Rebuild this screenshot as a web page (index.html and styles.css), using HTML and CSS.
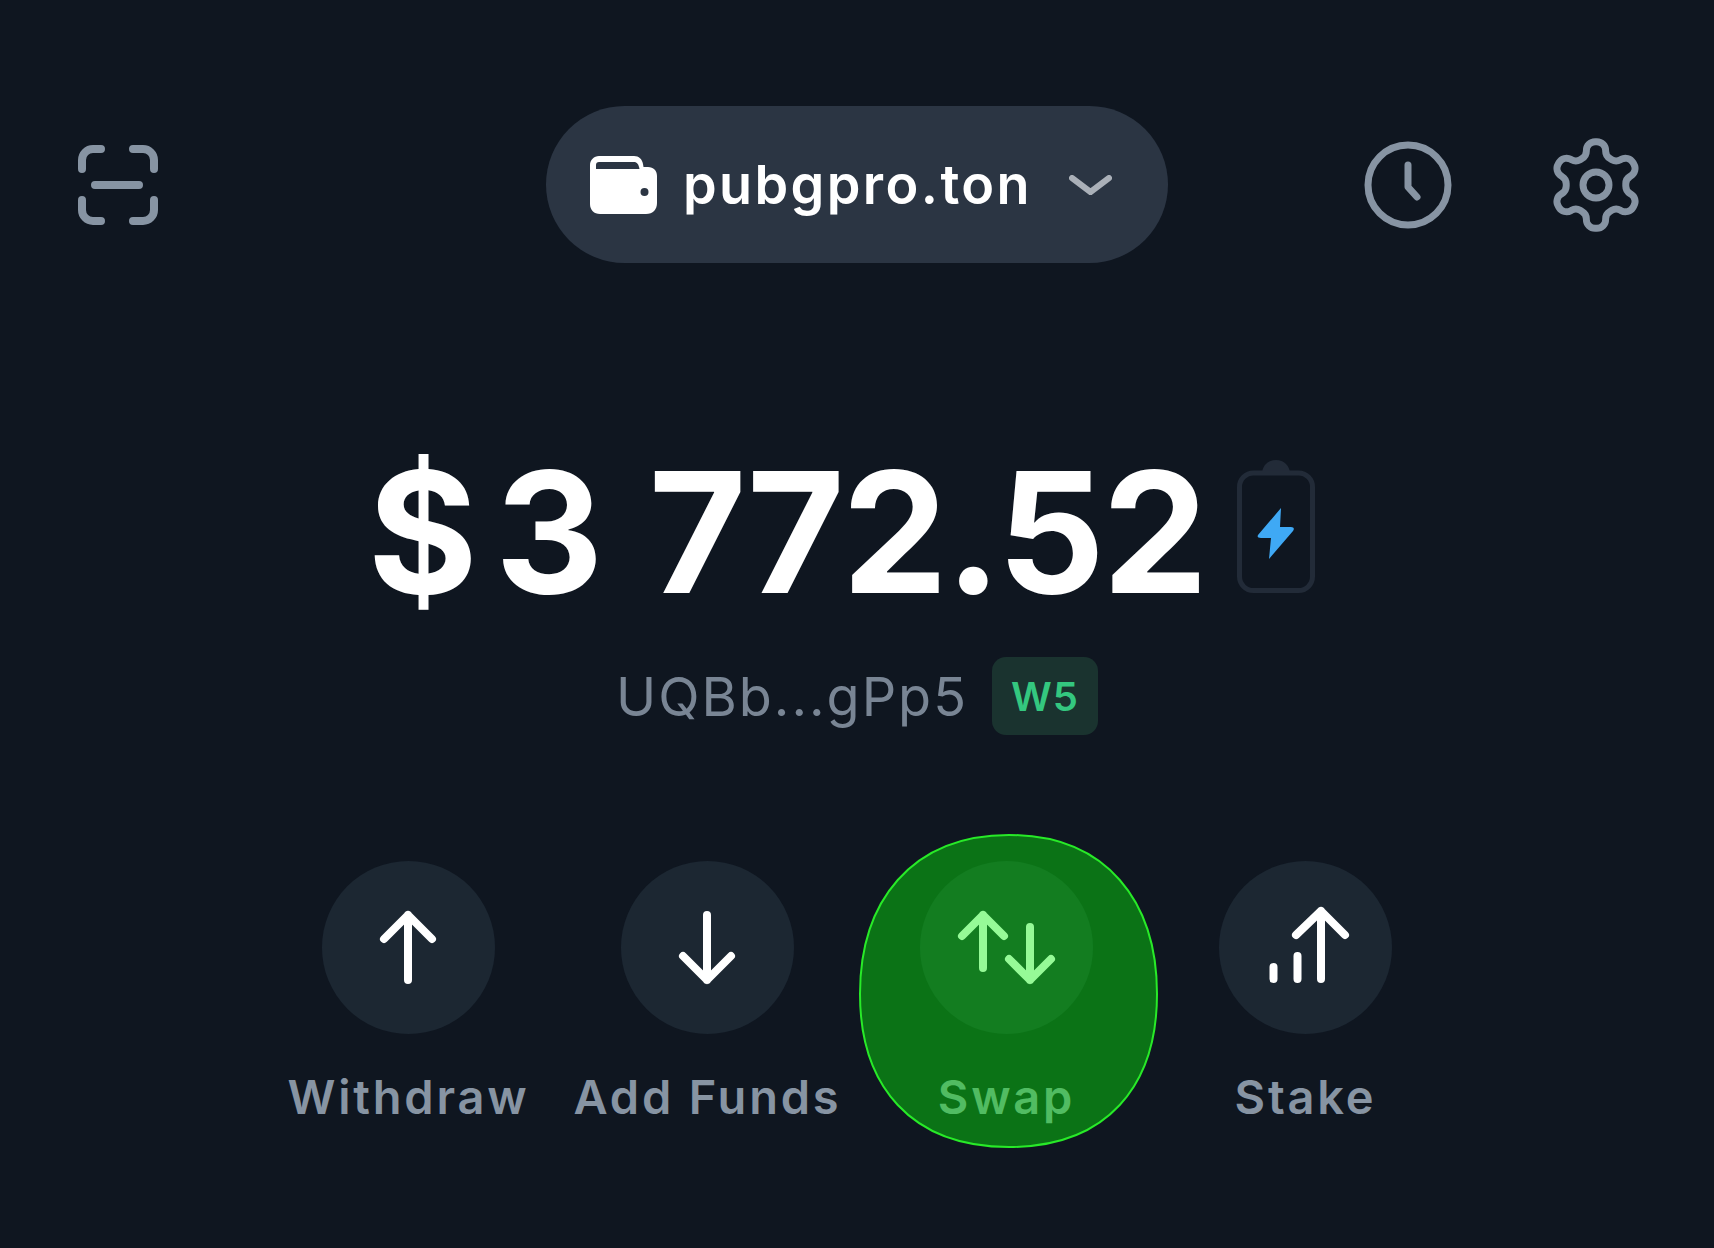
FILE: index.html
```html
<!DOCTYPE html>
<html lang="en">
<head>
  <meta charset="UTF-8">
  <title>Wallet</title>
  <link rel="stylesheet" href="styles.css">
</head>
<body>
  <div class="screen">
    <div class="header">
      <svg class="icon-scan" viewBox="0 0 80 80" fill="none">
        <path d="M4 24V15A11 11 0 0 1 15 4H23M55 4H65A11 11 0 0 1 76 15V24M4 55V65A11 11 0 0 0 15 76H23M55 76H65A11 11 0 0 0 76 65V55M17 40H61"/>
      </svg>
      <div class="wallet-pill">
        <svg class="icon-wallet" viewBox="0 0 67 58">
          <path fill="#fff" d="M9 0H44C49 0 52 3 53 8L53.500 11H58C63.500 11 67 14.500 67 20V47C67 53.500 63 58 56 58H10C4 58 0 54 0 48V9C0 4 4 0 9 0Z"/>
          <path fill="#2b3543" d="M9 6H44C47 6 48.500 8 49.500 13H6V9C6 7 7 6 9 6Z"/>
          <circle fill="#2b3543" cx="54.500" cy="36" r="4"/>
        </svg>
        <span class="wallet-name">pubgpro.ton</span>
        <svg class="icon-chevron" viewBox="0 0 43 20" fill="none">
          <path d="M3 3L21.500 17L40 3"/>
        </svg>
      </div>
      <div class="header-right">
        <svg class="icon-clock" viewBox="0 0 90 90" fill="none">
          <circle cx="45" cy="45" r="40"/>
          <path d="M45 25V47L54 57"/>
        </svg>
        <svg class="icon-gear" viewBox="0 0 24 24" fill="none">
          <path d="M12.220 2h-.44a2 2 0 0 0-2 2v.18a2 2 0 0 1-1 1.730l-.43.25a2 2 0 0 1-2 0l-.15-.08a2 2 0 0 0-2.730.73l-.22.38a2 2 0 0 0 .73 2.730l.15.1a2 2 0 0 1 1 1.720v.51a2 2 0 0 1-1 1.740l-.15.09a2 2 0 0 0-.73 2.730l.22.38a2 2 0 0 0 2.730.73l.15-.08a2 2 0 0 1 2 0l.43.25a2 2 0 0 1 1 1.730V20a2 2 0 0 0 2 2h.44a2 2 0 0 0 2-2v-.18a2 2 0 0 1 1-1.730l.43-.25a2 2 0 0 1 2 0l.15.08a2 2 0 0 0 2.730-.73l.22-.39a2 2 0 0 0-.73-2.730l-.15-.08a2 2 0 0 1-1-1.740v-.5a2 2 0 0 1 1-1.740l.15-.09a2 2 0 0 0 .73-2.730l-.22-.38a2 2 0 0 0-2.730-.73l-.15.08a2 2 0 0 1-2 0l-.43-.25a2 2 0 0 1-1-1.730V4a2 2 0 0 0-2-2z"/>
          <circle cx="12" cy="12" r="3"/>
        </svg>
      </div>
    </div>

    <div class="balance">
      <span class="balance-value"><span class="currency">$</span>3 772.52</span>
      <svg class="icon-battery" viewBox="0 0 78 133">
        <path fill="#222b38" d="M25 14C25 6 31 0 39 0C47 0 53 6 53 14Z"/>
        <rect x="2.500" y="13" width="73" height="117.500" rx="14" fill="none" stroke="#222b38" stroke-width="5"/>
        <path fill="#3fa9f5" d="M44 48L21 75Q19.500 78 24 78H34L32 99L56 71Q58.500 67 54 67H43Z"/>
      </svg>
    </div>

    <div class="address-row">
      <span class="address">UQBb...gPp5</span>
      <span class="version-badge">W5</span>
    </div>

    <div class="actions">
      <div class="action">
        <div class="action-circle">
          <svg class="action-icon" viewBox="0 0 173 173" fill="none">
            <path d="M86 54V119M62 78L86 54L110 78"/>
          </svg>
        </div>
        <div class="action-label">Withdraw</div>
      </div>
      <div class="action">
        <div class="action-circle">
          <svg class="action-icon" viewBox="0 0 173 173" fill="none">
            <path d="M86 54V119M62 95L86 119L110 95"/>
          </svg>
        </div>
        <div class="action-label">Add Funds</div>
      </div>
      <div class="action">
        <div class="action-circle">
          <svg class="action-icon" viewBox="0 0 173 173" fill="none">
            <path d="M63 54V107M42 75L63 54L84 75M110 66V119M89 98L110 119L131 98"/>
          </svg>
        </div>
        <div class="action-label">Swap</div>
        <svg class="highlight" viewBox="0 0 299 314">
          <path d="M150 1C248 1 298 68 298 160C298 252 248 313 150 313C52 313 1 252 1 160C1 68 52 1 150 1Z"/>
        </svg>
      </div>
      <div class="action">
        <div class="action-circle">
          <svg class="action-icon" viewBox="0 0 173 173" fill="none">
            <path d="M54.500 106V118M78.500 95V118M102 50V118M77 74L102 50L126 74"/>
          </svg>
        </div>
        <div class="action-label">Stake</div>
      </div>
    </div>
  </div>
</body>
</html>
```

FILE: styles.css
```css
body {
  margin: 0;
  background-color: #0f1620;
  font-family: Inter, "Noto Sans", sans-serif;
}

.screen {
  width: 1714px;
  height: 1248px;
  overflow: hidden;
  padding-top: 106px;
  box-sizing: border-box;
}

.header {
  display: grid;
  grid-template-columns: 1fr auto 1fr;
  align-items: center;
  padding: 0 66px;
}

.icon-scan {
  width: 80px;
  height: 80px;
  margin-left: 12px;
  stroke: #8794a3;
  stroke-width: 8;
  stroke-linecap: round;
}

.wallet-pill {
  display: flex;
  align-items: center;
  height: 157px;
  padding: 0 56px 0 44px;
  border-radius: 79px;
  background-color: #2b3543;
}

.icon-wallet {
  width: 67px;
  height: 58px;
}

.wallet-name {
  margin: 0 37px 0 26px;
  font-size: 54px;
  font-weight: 600;
  letter-spacing: 2.400px;
  color: #fff;
}

.icon-chevron {
  width: 43px;
  height: 20px;
  stroke: #aab0b8;
  stroke-width: 6;
  stroke-linecap: round;
  stroke-linejoin: round;
}

.header-right {
  display: flex;
  justify-content: flex-end;
  align-items: center;
  gap: 91px;
}

.icon-clock {
  width: 90px;
  height: 90px;
  stroke: #8794a3;
  stroke-width: 7;
  stroke-linecap: round;
  stroke-linejoin: round;
}

.icon-gear {
  width: 104px;
  height: 104px;
  stroke: #8794a3;
  stroke-width: 1.600;
}

.balance {
  display: flex;
  justify-content: center;
  align-items: flex-end;
  margin-top: 185px;
  padding-right: 31px;
  gap: 32px;
}

.balance-value {
  font-size: 168px;
  line-height: 1;
  font-weight: 700;
  letter-spacing: -2.700px;
  word-spacing: 11px;
  color: #fff;
  white-space: nowrap;
}

.currency {
  margin-right: 20px;
}

.icon-battery {
  width: 78px;
  height: 133px;
  margin-bottom: 23px;
}

.address-row {
  display: flex;
  justify-content: center;
  align-items: center;
  gap: 24px;
  margin-top: 41px;
}

.address {
  font-size: 54px;
  font-weight: 400;
  letter-spacing: 2px;
  color: #798594;
}

.version-badge {
  display: flex;
  justify-content: center;
  align-items: center;
  width: 106px;
  height: 78px;
  border-radius: 14px;
  background-color: #1a332f;
  font-size: 40px;
  font-weight: 600;
  letter-spacing: 1px;
  color: #34c77f;
}

.actions {
  display: grid;
  grid-template-columns: repeat(4, 299px);
  justify-content: center;
  margin-top: 126px;
}

.action {
  position: relative;
  display: flex;
  flex-direction: column;
  align-items: center;
}

.action-circle {
  width: 173px;
  height: 173px;
  border-radius: 50%;
  background-color: #1c2732;
}

.action-icon {
  display: block;
  stroke: #fff;
  stroke-width: 8;
  stroke-linecap: round;
  stroke-linejoin: round;
}

.action-label {
  margin-top: 34px;
  font-size: 47px;
  font-weight: 600;
  letter-spacing: 2.800px;
  color: #8794a3;
  white-space: nowrap;
}

.highlight {
  position: absolute;
  left: 2px;
  top: -27px;
  width: 299px;
  height: 314px;
}

.highlight path {
  fill: rgba(8, 243, 10, 0.425);
  stroke: #28ea28;
  stroke-width: 2;
}
```
